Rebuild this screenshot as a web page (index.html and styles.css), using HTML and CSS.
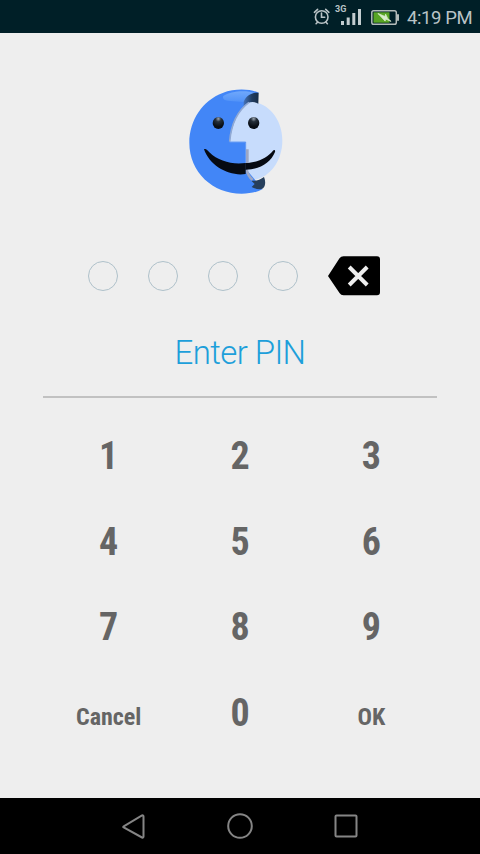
FILE: index.html
```html
<!DOCTYPE html>
<html lang="en">
<head>
<meta charset="utf-8">
<title>Enter PIN</title>
<link rel="stylesheet" href="styles.css">
</head>
<body>
<div class="screen">
  <header class="status">
    <svg class="status-icons" width="90" height="33" viewBox="0 0 90 33" fill="none">
      <g stroke="#b9c3c6" stroke-width="1.6" stroke-linecap="round">
        <circle cx="9.700" cy="17" r="6.300"/>
        <path d="M9.500 13v4.300h3.200M2.400 12.300l3.200-3M13.700 9.300l3.200 3"/>
        <path d="M5.500 22.200l-1.400 1.500M14 22.200l1.400 1.500"/>
      </g>
      <path fill="#c3cdd0" d="M29 21h3v4h-3zM34.700 17.500h3V25h-3zM40.300 13h3v12h-3zM46 9h3v16h-3z"/>
      <rect x="59.800" y="10.700" width="24.500" height="13.500" rx="1.800" stroke="#b3bbb9" stroke-width="1.500"/>
      <path d="M85 14.200h2v6.500h-2" fill="#b3bbb9"/>
      <path d="M61.500 12.300h16v10.400h-16z" fill="#58a524"/>
      <path d="M66 13.500l7 3 .6-2.300 2 4.200 3.500 3-5.300-2.300-.7 2z" fill="#d9edcc" stroke="#d9edcc" stroke-width=".8"/>
    </svg>
    <span class="network">3G</span>
    <span class="time">4:19 PM</span>
  </header>
  <main class="content">
    <svg class="logo" width="115" height="125" viewBox="0 0 345 375">
      <defs>
        <linearGradient id="shine" x1="0" y1="0" x2="0" y2="1"><stop offset="0" stop-color="#70a8fb"/><stop offset="1" stop-color="#4f91f8"/></linearGradient>
        <linearGradient id="flap" x1="0" y1="0" x2="1" y2="0"><stop offset="0" stop-color="#4473bb"/><stop offset=".55" stop-color="#203c60"/><stop offset="1" stop-color="#172e49"/></linearGradient>
        <radialGradient id="eye" cx=".5" cy=".15" r=".65"><stop offset="0" stop-color="#9ba4af"/><stop offset=".38" stop-color="#26303b"/><stop offset="1" stop-color="#090e15"/></radialGradient>
      </defs>
      <path d="M206 65C266 65 307 119 307 182c0 58-36 110-85 117l-27-35v-76h-49c4-52 25-98 60-123z" fill="#c7dcfc"/>
      <path d="M236 38C212 27 166 24 128 39 68 61 28 121 28 188c0 89 71 153 157 153 27 0 48-5 63-14l-52-62v-78h-47c6-54 26-99 58-121z" fill="#4286f7"/>
      <path d="M130 48c20-15 67-19 95-9l-25 28c-22-3-60-3-67-8-4-3-5-7-3-11z" fill="url(#shine)"/>
      <path d="M191 65c7-17 23-28 45-27l-1 33c-14-8-30-7-44 9z" fill="url(#flap)"/>
      <path d="M207 67c-34 25-54 65-58 118" fill="none" stroke="#91a9d3" stroke-width="5"/>
      <path d="M149 186h48v64" fill="none" stroke="#397ff0" stroke-width="2"/>
      <path d="M202 208v43M200 269c3 16 10 24 18 31" fill="none" stroke="#9da7c4" stroke-width="8"/>
      <path d="M214 302c15 2 26-3 38-11 6 14 4 29-3 34-8 6-23 2-34-4l9-9z" fill="#263f5c"/>
      <path d="M72 208c5-3 10 2 16 9 28 27 67 37 109 32v33C148 290 89 258 72 208z" fill="#060a12"/>
      <path d="M196 249c36-1 65-15 83-37 3-4 8-1 6 4-13 33-48 54-89 53z" fill="#060a12"/>
      <ellipse cx="115" cy="129" rx="17" ry="18" fill="url(#eye)"/>
      <ellipse cx="221" cy="129" rx="17" ry="18" fill="url(#eye)"/>
    </svg>
    <div class="entry">
      <i class="dot"></i><i class="dot"></i><i class="dot"></i><i class="dot"></i>
      <svg class="erase" width="53" height="40" viewBox="0 0 53 40">
        <path d="M0 20L11.500 2.300Q13 .3 15.500.3H49q3 0 3 3v33q0 3-3 3H15.500Q13 39.300 11.500 37z" fill="#000"/>
        <path d="M21.200 11l18 18M39.200 11l-18 18" stroke="#eee" stroke-width="4"/>
      </svg>
    </div>
    <h1 class="title">Enter PIN</h1>
    <div class="keypad">
      <button class="key">1</button><button class="key">2</button><button class="key">3</button>
      <button class="key">4</button><button class="key">5</button><button class="key">6</button>
      <button class="key">7</button><button class="key">8</button><button class="key">9</button>
      <button class="key action">Cancel</button><button class="key">0</button><button class="key action">OK</button>
    </div>
  </main>
  <nav class="navbar">
    <svg width="26" height="28" viewBox="0 0 26 28"><path d="M2.700 14.300L21 3.500q1.500-.5 1.500 1v20q0 1.500-1.500 1L2.700 15.500q-1-.6 0-1.200z"/></svg>
    <svg width="28" height="28" viewBox="0 0 28 28"><circle cx="14" cy="14" r="11.800"/></svg>
    <svg width="26" height="28" viewBox="0 0 26 28"><rect x="2.500" y="3.500" width="21" height="21" rx="1"/></svg>
  </nav>
</div>
</body>
</html>
```
FILE: styles.css
```css
* { box-sizing: border-box; }
body { margin: 0; background: #eee; font-family: Roboto, sans-serif; }
.screen { width: 480px; height: 854px; display: flex; flex-direction: column; overflow: hidden; }
.status {
  position: relative;
  height: 33px;
  flex: none;
  display: flex;
  justify-content: flex-end;
  padding-right: 8px;
  background: #001f27;
  color: #b9c3c6;
}
.status-icons { margin-right: 5px; }
.network { position: absolute; left: 335px; top: 4px; font-size: 9px; line-height: 11px; font-weight: 700; }
.time { width: 65px; font-size: 18.500px; line-height: 36px; letter-spacing: -0.4px; white-space: nowrap; }
.content { flex: 1; display: flex; flex-direction: column; padding: 47px 43px 0; }
.logo { margin-left: 137px; flex: none; }
.entry { display: flex; align-items: center; height: 40px; margin: 51px 0 0 45px; }
.dot { width: 30px; height: 30px; margin-right: 30px; border: 1.500px solid #afc1ca; border-radius: 50%; }
.erase { margin-left: 0; }
.title {
  height: 102px;
  margin: 0;
  padding-top: 37px;
  border-bottom: 2px solid #c1c1c1;
  color: #1d9fda;
  font-size: 33px;
  line-height: 40px;
  letter-spacing: -0.6px;
  font-weight: 300;
  text-align: center;
}
.keypad { display: grid; grid-template-columns: repeat(3, 1fr); grid-auto-rows: 85.500px; margin-top: 15px; }
.key {
  border: 0;
  padding: 0;
  background: none;
  color: #656565;
  font: 700 38px/86px "Roboto Condensed", Roboto, sans-serif;
  font-stretch: 75%;
}
.action { font-size: 24px; padding-top: 4px; line-height: 87px; }
.navbar {
  height: 56px;
  flex: none;
  display: flex;
  justify-content: space-between;
  align-items: center;
  padding: 0 121px;
  background: #000;
}
.navbar svg { fill: none; stroke: #858585; stroke-width: 2; }
```
